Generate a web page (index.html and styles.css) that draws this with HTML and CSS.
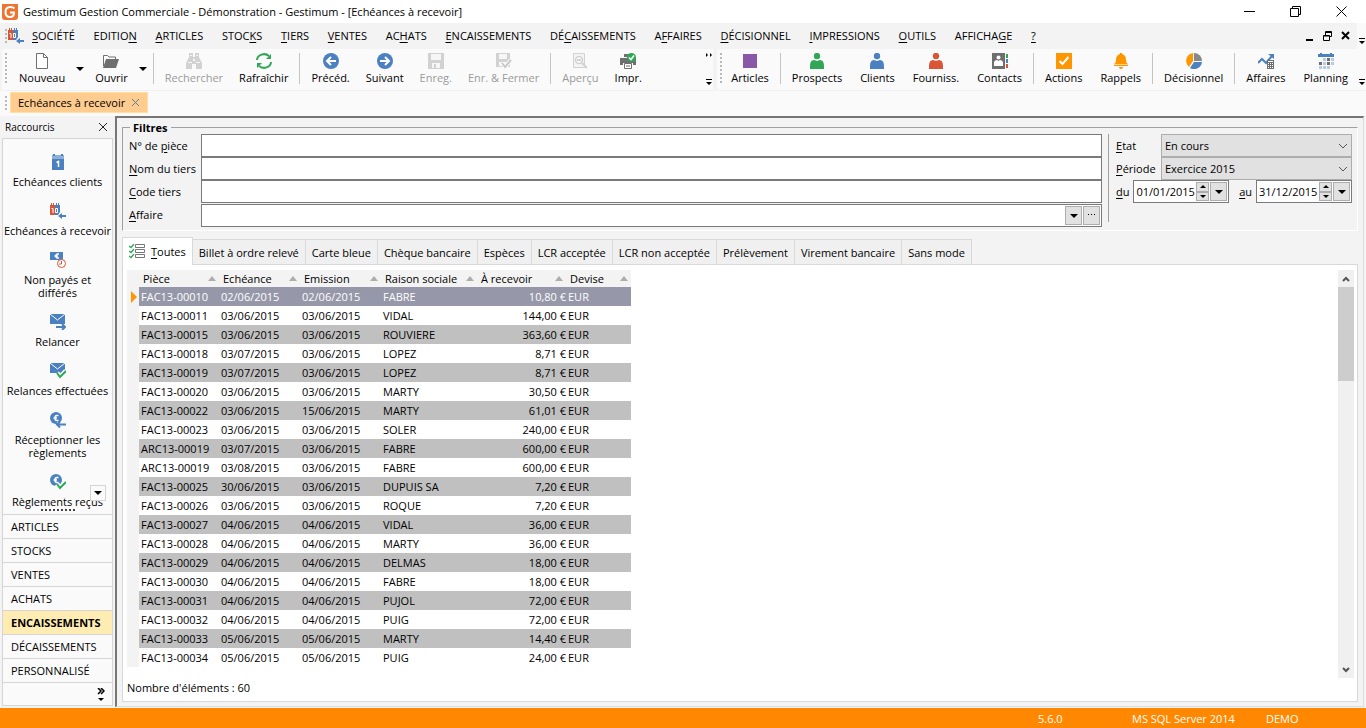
FILE: index.html
```html
<!DOCTYPE html>
<html lang="fr">
<head>
    <meta charset="UTF-8">
    <meta name="viewport" content="width=device-width, initial-scale=1.0">
    <title>Gestimum Gestion Commerciale</title>
    <link rel="stylesheet" href="styles.css">
</head>
<body>
    <!-- Icônes -->
    <svg class="sprite" aria-hidden="true">
        <symbol id="logo" viewBox="0 0 16 16"><path fill="#ee7430" d="M0 0h16v13q0 3-3 3H3q-3 0-3-3z"/><path fill="none" stroke="#fff" stroke-width="2" d="M12.500 4.500Q11 3 8.500 3 3.500 3 3.500 8t4.500 5q4 0 4-4.500H8"/></symbol>
        <symbol id="cal-in" viewBox="0 0 16 16"><path fill="#d95535" d="M0 2h5v10H0z"/><path fill="#4b81c0" d="M5 2h5v7l-2 3H5z"/><path fill="#d95535" d="M1 0h1v3H1zM3 0h1v3H3z"/><path fill="#4b81c0" d="M6 0h1v3H6zM8 0h1v3H8z"/><path fill="none" stroke="#fff" d="M1.500 5.500h1.500V10M5.500 5.500h2v4h-2z"/><path fill="#4b81c0" d="M8 13l4-3v2h4v2h-4v2z"/></symbol>
        <symbol id="new" viewBox="0 0 16 16"><path fill="#fff" stroke="#6f6f6f" d="M2.500.5h7l4 4v11h-11z"/><path fill="none" stroke="#6f6f6f" d="M9.500.5v4h4"/></symbol>
        <symbol id="open" viewBox="0 0 16 16"><path fill="#fff" stroke="#6f6f6f" d="M.5 13V2.500h4l1.500 1.500h6.500V7"/><path fill="#6f6f6f" d="M3 6h13l-3 9H0z"/></symbol>
        <symbol id="find" viewBox="0 0 16 16"><path fill="#d2d2d2" d="M3 0h4v4h2V0h4v4l3 6v6h-6v-5H6v5H0v-6l3-6z"/><path fill="#f6f6f6" d="M4 2h2v1H4zM10 2h2v1h-2zM2 9h4v1H2zM10 9h4v1h-4zM7 6h2v2H7z"/></symbol>
        <symbol id="refresh" viewBox="0 0 16 16"><path fill="none" stroke="#2fa757" stroke-width="2" d="M1 7a7 6 0 0 1 12-4M15 9a7 6 0 0 1-12 4"/><path fill="#2fa757" d="M15 1v5h-5zM1 15v-5h5z"/></symbol>
        <symbol id="prev" viewBox="0 0 16 16"><circle cx="8" cy="8" r="8" fill="#4b81c0"/><path fill="none" stroke="#fff" stroke-width="2" d="M13 8H4M8 4L4 8l4 4"/></symbol>
        <symbol id="next" viewBox="0 0 16 16"><circle cx="8" cy="8" r="8" fill="#4b81c0"/><path fill="none" stroke="#fff" stroke-width="2" d="M3 8h9M8 4l4 4-4 4"/></symbol>
        <symbol id="save" viewBox="0 0 16 16"><path fill="#d2d2d2" d="M0 0h16v16H0z"/><path fill="#f6f6f6" d="M3 1h10v6H3zM4 10h8v5H4z"/><path fill="#d2d2d2" d="M6 11h2v4H6z"/></symbol>
        <symbol id="save-close" viewBox="0 0 16 16"><path fill="#d2d2d2" d="M0 0h14v14H0z"/><path fill="#f6f6f6" d="M3 1h8v5H3zM3 9h8v4H3z"/><path fill="none" stroke="#fafafa" stroke-width="4" d="M6 10l3 4 6-7"/><path fill="none" stroke="#c8c8c8" stroke-width="2" d="M6 10l3 4 6-7"/></symbol>
        <symbol id="preview" viewBox="0 0 16 16"><path fill="#f4f4f4" stroke="#d2d2d2" d="M1.500.5h11v14h-11z"/><circle cx="7" cy="7" r="3.500" fill="#fafafa" stroke="#d2d2d2" stroke-width="1.500"/><path stroke="#d2d2d2" stroke-width="2" d="M5 7h4M10 10l5 5"/></symbol>
        <symbol id="print" viewBox="0 0 16 16"><path fill="#6f6f6f" d="M0 5h16v7h-3v-2H3v2H0zM4 1h5v3H4z"/><path fill="#fff" stroke="#6f6f6f" d="M4.500 10.500h7v5h-7z"/><path stroke="#6f6f6f" d="M6 13h4"/><circle cx="11.500" cy="4.500" r="4.500" fill="#2fa757"/><path fill="none" stroke="#fff" stroke-width="1.500" d="M9 4.500l2 2 3-4"/></symbol>
        <symbol id="articles" viewBox="0 0 16 16"><path fill="#8959a8" d="M1 1h14v14H1z"/></symbol>
        <symbol id="person" viewBox="0 0 16 16"><circle cx="8" cy="3" r="3.200" fill="currentColor"/><path fill="currentColor" d="M1 16v-3q0-6 4-6l3 1 3-1q4 0 4 6v3z"/></symbol>
        <symbol id="contacts" viewBox="0 0 16 16"><path fill="#6f6f6f" d="M0 0h13v16H0z"/><circle cx="6.500" cy="4.500" r="2" fill="#fff"/><path fill="#fff" d="M2 13V9q1-2 3-2l1.500 1L8 7q2 0 3 2v4z"/><path fill="#2fa757" d="M14 1h2v4h-2z"/><path fill="#4b81c0" d="M14 6h2v4h-2z"/><path fill="#d95535" d="M14 11h2v4h-2z"/></symbol>
        <symbol id="actions" viewBox="0 0 16 16"><path fill="#ff9500" d="M0 0h16v16H0z"/><path fill="none" stroke="#fff" stroke-width="2" d="M3.500 8l3 3 6-7"/></symbol>
        <symbol id="bell" viewBox="0 0 16 16"><path fill="#ff9500" d="M7 0h2v1q4 1 4 6 0 3 2 4v2H1v-2q2-1 2-4 0-5 4-6zM6 14h4q0 2-2 2t-2-2z"/><path stroke="#ffd59a" d="M1 11.500h14"/></symbol>
        <symbol id="pie" viewBox="0 0 16 16"><path fill="#ff9500" d="M7 0v8l-4 6a8 8 0 0 1 4-14z"/><path fill="#888" d="M8 0a8 8 0 0 1 8 8H8z"/><path fill="#4b81c0" d="M8 9h8a8 8 0 0 1-12 6z"/></symbol>
        <symbol id="deals" viewBox="0 0 16 16"><path fill="none" stroke="#4b81c0" stroke-width="2" d="M0 10l4-4 4 4 6-7"/><path fill="#4b81c0" d="M10 1h6v5z"/><path fill="#6f6f6f" d="M9 7h7v9H9z"/><path fill="#fff" d="M10 8h5v1h-5zM10 10h1v1h-1zM12 10h1v1h-1zM14 10h1v1h-1zM10 12h1v1h-1zM12 12h1v1h-1zM14 12h1v1h-1zM10 14h1v1h-1zM12 14h1v1h-1zM14 14h1v1h-1z"/></symbol>
        <symbol id="planning" viewBox="0 0 16 16"><path fill="#4b81c0" d="M0 1h16v3H0zM2 0h2v1H2zM12 0h2v1h-2z"/><path fill="#b8cbe4" d="M5 5h3v3H5zM13 5h3v3h-3zM5 9h3v3H5zM13 9h3v3h-3zM1 13h3v3H1zM5 13h3v3H5zM9 13h3v3H9z"/><path fill="#6f6f6f" d="M9 5h3v3H9zM1 9h3v3H1zM9 9h3v3H9z"/></symbol>
        <symbol id="cal-one" viewBox="0 0 16 16"><path fill="#8fb0d9" d="M2 1h12v4H2z"/><path fill="#4b81c0" d="M2 5h12v11H2zM3 0h2v2H3zM11 0h2v2h-2z"/><path fill="none" stroke="#fff" stroke-width="1.500" d="M6.500 8.500l2-1V13"/></symbol>
        <symbol id="unpaid" viewBox="0 0 16 16"><path fill="#4b81c0" d="M0 0h13v8H0z"/><path fill="none" stroke="#fff" stroke-width="1.500" d="M9 2H7.500Q6 2 6 4t1.500 2H9M4.500 4H8"/><circle cx="11.500" cy="11.500" r="4" fill="#fff" stroke="#d95535"/><path fill="none" stroke="#d95535" d="M11.500 9v3H9"/></symbol>
        <symbol id="mail-out" viewBox="0 0 16 16"><path fill="#4b81c0" d="M0 0h15v10H0z"/><path fill="none" stroke="#fff" d="M0 0l7.500 6L15 0"/><path fill="none" stroke="#fafafa" stroke-width="4" d="M6 13h9"/><path fill="none" stroke="#4b81c0" stroke-width="2" d="M6 13h9M12 10l3 3-3 3"/></symbol>
        <symbol id="mail-ok" viewBox="0 0 16 16"><path fill="#4b81c0" d="M0 0h15v10H0z"/><path fill="none" stroke="#fff" d="M0 0l7.500 6L15 0"/><path fill="none" stroke="#fafafa" stroke-width="5" d="M7 10l3 4 6-6"/><path fill="none" stroke="#2fa757" stroke-width="2" d="M7 10l3 4 6-6"/></symbol>
        <symbol id="euro-in" viewBox="0 0 16 16"><circle cx="6" cy="6" r="6" fill="#4b81c0"/><path fill="none" stroke="#fff" stroke-width="1.500" d="M8.500 3.500H7Q5 3.500 5 6t2 2.500h1.500M3.500 6H7"/><path fill="none" stroke="#fafafa" stroke-width="5" d="M7 12.500h9"/><path fill="none" stroke="#4b81c0" stroke-width="2" d="M16 12.500H7M10 9.500l-3 3 3 3"/></symbol>
        <symbol id="euro-ok" viewBox="0 0 16 16"><circle cx="6" cy="6" r="6" fill="#4b81c0"/><path fill="none" stroke="#fff" stroke-width="1.500" d="M8.500 3.500H7Q5 3.500 5 6t2 2.500h1.500M3.500 6H7"/><path fill="none" stroke="#fafafa" stroke-width="5" d="M7 10l3 4 6-6"/><path fill="none" stroke="#2fa757" stroke-width="2" d="M7 10l3 4 6-6"/></symbol>
        <symbol id="checklist" viewBox="0 0 16 16"><path fill="#fff" stroke="#777" d="M6.500.5h9v3h-9zM6.500 5.500h9v3h-9zM6.500 10.500h9v3h-9z"/><path fill="none" stroke="#2fa757" stroke-width="1.300" d="M0 2l2 1.500L5 0M0 7l2 1.500L5 5M0 12l2 1.500L5 10"/></symbol>
        <symbol id="overflow" viewBox="0 0 6 6"><path d="M0 0h6v1H0zM0 3h6L3 6z"/></symbol>
        <symbol id="down" viewBox="0 0 8 4"><path d="M0 0h8L4 4z"/></symbol>
        <symbol id="up" viewBox="0 0 8 4"><path d="M0 4h8L4 0z"/></symbol>
    </svg>

    <header class="titlebar">
        <svg class="icon"><use href="#logo"/></svg>
        <span class="title">Gestimum Gestion Commerciale - Démonstration - Gestimum - [Echéances à recevoir]</span>
        <button aria-label="Réduire"><svg width="11" height="11"><path stroke="#000" d="M0 5.500h11"/></svg></button>
        <button aria-label="Restaurer"><svg width="11" height="11"><path fill="none" stroke="#000" d="M.5 2.500h8v8h-8zM2.500 2V.5h8v8H9"/></svg></button>
        <button aria-label="Fermer"><svg width="11" height="11"><path stroke="#000" d="M.5.5l10 10M10.500.5l-10 10"/></svg></button>
    </header>

    <nav class="menu">
        <i class="grip"></i>
        <svg class="icon"><use href="#cal-in"/></svg>
        <div class="menu-items">
            <a href="#"><u>S</u>OCIÉTÉ</a>
            <a href="#">EDITIO<u>N</u></a>
            <a href="#"><u>A</u>RTICLES</a>
            <a href="#">STOC<u>K</u>S</a>
            <a href="#"><u>T</u>IERS</a>
            <a href="#"><u>V</u>ENTES</a>
            <a href="#">AC<u>H</u>ATS</a>
            <a href="#"><u>E</u>NCAISSEMENTS</a>
            <a href="#">DÉ<u>C</u>AISSEMENTS</a>
            <a href="#">A<u>F</u>FAIRES</a>
            <a href="#"><u>D</u>ÉCISIONNEL</a>
            <a href="#"><u>I</u>MPRESSIONS</a>
            <a href="#"><u>O</u>UTILS</a>
            <a href="#">AFFICHA<u>G</u>E</a>
            <a href="#"><u>?</u></a>
        </div>
        <div class="mdi">
            <button aria-label="Réduire la fenêtre"><svg width="10" height="10"><path d="M1 8h7v2H1z"/></svg></button>
            <button aria-label="Restaurer la fenêtre"><svg width="10" height="10"><path fill="none" stroke="#000" d="M.5 4.500h6v5h-6zM.5 5h6M2.500 4V.5h6v5H7M3 1.500h6"/></svg></button>
            <button aria-label="Fermer la fenêtre"><svg width="10" height="10"><path stroke="#000" stroke-width="2" d="M1 1l7 7M8 1L1 8"/></svg></button>
        </div>
        <button class="overflow" aria-label="Options du menu"><svg><use href="#overflow"/></svg></button>
    </nav>

    <div class="toolbars">
        <div class="toolbar main">
            <i class="grip"></i>
            <button class="tool"><svg class="icon"><use href="#new"/></svg>Nouveau</button>
            <button class="drop" aria-label="Choix nouveau"><svg><use href="#down"/></svg></button>
            <button class="tool"><svg class="icon"><use href="#open"/></svg>Ouvrir</button>
            <button class="drop" aria-label="Choix ouvrir"><svg><use href="#down"/></svg></button>
            <i class="sep"></i>
            <button class="tool" disabled><svg class="icon"><use href="#find"/></svg>Rechercher</button>
            <button class="tool"><svg class="icon"><use href="#refresh"/></svg>Rafraîchir</button>
            <i class="sep"></i>
            <button class="tool"><svg class="icon"><use href="#prev"/></svg>Précéd.</button>
            <button class="tool"><svg class="icon"><use href="#next"/></svg>Suivant</button>
            <button class="tool" disabled><svg class="icon"><use href="#save"/></svg>Enreg.</button>
            <button class="tool" disabled><svg class="icon"><use href="#save-close"/></svg>Enr. &amp; Fermer</button>
            <i class="sep"></i>
            <button class="tool" disabled><svg class="icon"><use href="#preview"/></svg>Aperçu</button>
            <button class="tool"><svg class="icon"><use href="#print"/></svg>Impr.</button>
            <button class="overflow" aria-label="Autres boutons">
                <svg class="more" viewBox="0 0 6 4"><path d="M0 0l2 2-2 2zM4 0l2 2-2 2z"/></svg>
                <svg><use href="#overflow"/></svg>
            </button>
        </div>
        <div class="toolbar modules">
            <i class="grip"></i>
            <button class="tool"><svg class="icon"><use href="#articles"/></svg>Articles</button>
            <i class="sep"></i>
            <button class="tool"><svg class="icon green"><use href="#person"/></svg>Prospects</button>
            <button class="tool"><svg class="icon blue"><use href="#person"/></svg>Clients</button>
            <button class="tool"><svg class="icon red"><use href="#person"/></svg>Fourniss.</button>
            <button class="tool"><svg class="icon"><use href="#contacts"/></svg>Contacts</button>
            <i class="sep"></i>
            <button class="tool"><svg class="icon"><use href="#actions"/></svg>Actions</button>
            <button class="tool"><svg class="icon"><use href="#bell"/></svg>Rappels</button>
            <i class="sep"></i>
            <button class="tool"><svg class="icon"><use href="#pie"/></svg>Décisionnel</button>
            <i class="sep"></i>
            <button class="tool"><svg class="icon"><use href="#deals"/></svg>Affaires</button>
            <button class="tool"><svg class="icon"><use href="#planning"/></svg>Planning</button>
            <button class="overflow" aria-label="Autres modules"><svg><use href="#overflow"/></svg></button>
        </div>
    </div>

    <div class="windows">
        <i class="grip"></i>
        <div class="window-tab">
            <span>Echéances à recevoir</span>
            <button aria-label="Fermer l'onglet"><svg width="7" height="7"><path stroke="#5d7f9f" d="M0 0l7 7M7 0L0 7"/></svg></button>
        </div>
    </div>

    <div class="workspace">
        <aside class="sidebar">
            <div class="sidebar-head">
                <span>Raccourcis</span>
                <button aria-label="Fermer les raccourcis"><svg width="8" height="8"><path stroke="#222" d="M0 0l8 8M8 0L0 8"/></svg></button>
            </div>
            <div class="sidebar-box">
                <div class="shortcuts">
                    <a href="#"><svg class="icon"><use href="#cal-one"/></svg>Echéances clients</a>
                    <a href="#"><svg class="icon"><use href="#cal-in"/></svg>Echéances à recevoir</a>
                    <a href="#"><svg class="icon"><use href="#unpaid"/></svg>Non payés et<br>différés</a>
                    <a href="#"><svg class="icon"><use href="#mail-out"/></svg>Relancer</a>
                    <a href="#"><svg class="icon"><use href="#mail-ok"/></svg>Relances effectuées</a>
                    <a href="#"><svg class="icon"><use href="#euro-in"/></svg>Réceptionner les<br>règlements</a>
                    <a href="#"><svg class="icon"><use href="#euro-ok"/></svg>Règlements reçus</a>
                    <button class="scroll-down" aria-label="Suite"><svg><use href="#down"/></svg></button>
                </div>
                <i class="splitter"></i>
                <nav class="groups">
                    <a href="#">ARTICLES</a>
                    <a href="#">STOCKS</a>
                    <a href="#">VENTES</a>
                    <a href="#">ACHATS</a>
                    <a href="#" class="active">ENCAISSEMENTS</a>
                    <a href="#">DÉCAISSEMENTS</a>
                    <a href="#">PERSONNALISÉ</a>
                    <button aria-label="Configurer">
                        <svg width="8" height="13"><path fill="none" stroke="#000" stroke-width="1.500" d="M1 0l3 3-3 3M4 0l3 3-3 3"/><path d="M1 10h6l-3 3z"/></svg>
                    </button>
                </nav>
            </div>
        </aside>

        <main class="document">
            <fieldset class="filters">
                <legend>Filtres</legend>
                <div class="filter-cols">
                    <div class="filter-text">
                        <label for="piece">N° de <u>p</u>ièce</label>
                        <input type="text" id="piece">
                        <label for="nom"><u>N</u>om du tiers</label>
                        <input type="text" id="nom">
                        <label for="code"><u>C</u>ode tiers</label>
                        <input type="text" id="code">
                        <label for="affaire"><u>A</u>ffaire</label>
                        <div class="field affaire">
                            <input type="text" id="affaire">
                            <button aria-label="Liste des affaires"><svg><use href="#down"/></svg></button>
                            <button aria-label="Rechercher une affaire"><svg width="8" height="2"><path d="M0 0h1v1H0zM3 0h1v1H3zM6 0h1v1H6z"/></svg></button>
                        </div>
                    </div>
                    <div class="filter-period">
                        <div class="line">
                            <label for="etat"><u>E</u>tat</label>
                            <select id="etat"><option>En cours</option></select>
                            <svg class="chevron" viewBox="0 0 10 6"><path fill="none" stroke="#555" d="M1 1l4 4 4-4"/></svg>
                        </div>
                        <div class="line">
                            <label for="periode"><u>P</u>ériode</label>
                            <select id="periode"><option>Exercice 2015</option></select>
                            <svg class="chevron" viewBox="0 0 10 6"><path fill="none" stroke="#555" d="M1 1l4 4 4-4"/></svg>
                        </div>
                        <div class="dates">
                            <label for="du"><u>d</u>u</label>
                            <div class="field date">
                                <input type="text" id="du" value="01/01/2015">
                                <span class="spin">
                                    <button aria-label="Jour suivant"><svg><use href="#up"/></svg></button>
                                    <button aria-label="Jour précédent"><svg><use href="#down"/></svg></button>
                                </span>
                                <button aria-label="Calendrier début"><svg><use href="#down"/></svg></button>
                            </div>
                            <label for="au" class="to"><u>a</u>u</label>
                            <div class="field date">
                                <input type="text" id="au" value="31/12/2015">
                                <span class="spin">
                                    <button aria-label="Jour suivant"><svg><use href="#up"/></svg></button>
                                    <button aria-label="Jour précédent"><svg><use href="#down"/></svg></button>
                                </span>
                                <button aria-label="Calendrier fin"><svg><use href="#down"/></svg></button>
                            </div>
                        </div>
                    </div>
                </div>
            </fieldset>

            <div class="tabs" role="tablist">
                <button role="tab" class="active" aria-selected="true"><svg class="icon"><use href="#checklist"/></svg><span><u>T</u>outes</span></button>
                <button role="tab">Billet à ordre relevé</button>
                <button role="tab">Carte bleue</button>
                <button role="tab">Chèque bancaire</button>
                <button role="tab">Espèces</button>
                <button role="tab">LCR acceptée</button>
                <button role="tab">LCR non acceptée</button>
                <button role="tab">Prélèvement</button>
                <button role="tab">Virement bancaire</button>
                <button role="tab">Sans mode</button>
            </div>

            <section class="panel">
                <div class="grid">
                    <table>
                        <colgroup>
                            <col class="c-mark"><col class="c-piece"><col class="c-date"><col class="c-date"><col class="c-name"><col class="c-amount"><col class="c-cur">
                        </colgroup>
                        <thead>
                            <tr><th class="mark"></th><th>Pièce</th><th>Echéance</th><th>Emission</th><th>Raison sociale</th><th>À recevoir</th><th>Devise</th></tr>
                        </thead>
                        <tbody>
                            <tr class="selected"><td class="mark"><svg viewBox="0 0 6 12"><path fill="#ff9500" d="M0 0l6 6-6 6z"/></svg></td><td>FAC13-00010</td><td>02/06/2015</td><td>02/06/2015</td><td>FABRE</td><td class="num">10,80 €</td><td>EUR</td></tr>
                            <tr><td class="mark"></td><td>FAC13-00011</td><td>03/06/2015</td><td>03/06/2015</td><td>VIDAL</td><td class="num">144,00 €</td><td>EUR</td></tr>
                            <tr><td class="mark"></td><td>FAC13-00015</td><td>03/06/2015</td><td>03/06/2015</td><td>ROUVIERE</td><td class="num">363,60 €</td><td>EUR</td></tr>
                            <tr><td class="mark"></td><td>FAC13-00018</td><td>03/07/2015</td><td>03/06/2015</td><td>LOPEZ</td><td class="num">8,71 €</td><td>EUR</td></tr>
                            <tr><td class="mark"></td><td>FAC13-00019</td><td>03/07/2015</td><td>03/06/2015</td><td>LOPEZ</td><td class="num">8,71 €</td><td>EUR</td></tr>
                            <tr><td class="mark"></td><td>FAC13-00020</td><td>03/06/2015</td><td>03/06/2015</td><td>MARTY</td><td class="num">30,50 €</td><td>EUR</td></tr>
                            <tr><td class="mark"></td><td>FAC13-00022</td><td>03/06/2015</td><td>15/06/2015</td><td>MARTY</td><td class="num">61,01 €</td><td>EUR</td></tr>
                            <tr><td class="mark"></td><td>FAC13-00023</td><td>03/06/2015</td><td>03/06/2015</td><td>SOLER</td><td class="num">240,00 €</td><td>EUR</td></tr>
                            <tr><td class="mark"></td><td>ARC13-00019</td><td>03/07/2015</td><td>03/06/2015</td><td>FABRE</td><td class="num">600,00 €</td><td>EUR</td></tr>
                            <tr><td class="mark"></td><td>ARC13-00019</td><td>03/08/2015</td><td>03/06/2015</td><td>FABRE</td><td class="num">600,00 €</td><td>EUR</td></tr>
                            <tr><td class="mark"></td><td>FAC13-00025</td><td>30/06/2015</td><td>03/06/2015</td><td>DUPUIS SA</td><td class="num">7,20 €</td><td>EUR</td></tr>
                            <tr><td class="mark"></td><td>FAC13-00026</td><td>03/06/2015</td><td>03/06/2015</td><td>ROQUE</td><td class="num">7,20 €</td><td>EUR</td></tr>
                            <tr><td class="mark"></td><td>FAC13-00027</td><td>04/06/2015</td><td>04/06/2015</td><td>VIDAL</td><td class="num">36,00 €</td><td>EUR</td></tr>
                            <tr><td class="mark"></td><td>FAC13-00028</td><td>04/06/2015</td><td>04/06/2015</td><td>MARTY</td><td class="num">36,00 €</td><td>EUR</td></tr>
                            <tr><td class="mark"></td><td>FAC13-00029</td><td>04/06/2015</td><td>04/06/2015</td><td>DELMAS</td><td class="num">18,00 €</td><td>EUR</td></tr>
                            <tr><td class="mark"></td><td>FAC13-00030</td><td>04/06/2015</td><td>04/06/2015</td><td>FABRE</td><td class="num">18,00 €</td><td>EUR</td></tr>
                            <tr><td class="mark"></td><td>FAC13-00031</td><td>04/06/2015</td><td>04/06/2015</td><td>PUJOL</td><td class="num">72,00 €</td><td>EUR</td></tr>
                            <tr><td class="mark"></td><td>FAC13-00032</td><td>04/06/2015</td><td>04/06/2015</td><td>PUIG</td><td class="num">72,00 €</td><td>EUR</td></tr>
                            <tr><td class="mark"></td><td>FAC13-00033</td><td>05/06/2015</td><td>05/06/2015</td><td>MARTY</td><td class="num">14,40 €</td><td>EUR</td></tr>
                            <tr><td class="mark"></td><td>FAC13-00034</td><td>05/06/2015</td><td>05/06/2015</td><td>PUIG</td><td class="num">24,00 €</td><td>EUR</td></tr>
                        </tbody>
                    </table>
                    <div class="scrollbar">
                        <button aria-label="Monter"><svg viewBox="0 0 8 6"><path fill="none" stroke="#555" stroke-width="2" d="M1 5l3-3 3 3"/></svg></button>
                        <div class="thumb"></div>
                        <button aria-label="Descendre"><svg viewBox="0 0 8 6"><path fill="none" stroke="#555" stroke-width="2" d="M1 1l3 3 3-3"/></svg></button>
                    </div>
                </div>
                <p class="count">Nombre d'éléments : 60</p>
            </section>
        </main>
    </div>

    <footer class="status">
        <span class="version">5.6.0</span>
        <span class="server">MS SQL Server 2014</span>
        <span class="user">DEMO</span>
    </footer>
</body>
</html>
```
FILE: styles.css
```css
* {
    box-sizing: border-box;
}
body {
    margin: 0;
    min-height: 100vh;
    display: flex;
    flex-direction: column;
    background: #f3f3f3;
    color: #000;
    font-family: "Open Sans", "Noto Sans", sans-serif;
    font-size: 11px;
    line-height: 16px;
}
button, input, select {
    font: inherit;
    color: inherit;
    margin: 0;
    padding: 0;
    border: none;
    border-radius: 0;
    background: none;
}
button {
    display: flex;
    align-items: center;
    justify-content: center;
}
a {
    color: inherit;
    text-decoration: none;
}
svg {
    display: block;
    flex: none;
}
u {
    text-underline-offset: 2px;
}
.sprite {
    position: absolute;
    width: 0;
    height: 0;
}
.icon {
    width: 16px;
    height: 16px;
}
.green { color: #2fa757; }
.blue { color: #4b81c0; }
.red { color: #d95535; }
.grip {
    flex: none;
    width: 2px;
    background: repeating-linear-gradient(#b8b8b8 0 2px, transparent 2px 4px);
}

/* Barre de titre */
.titlebar {
    display: flex;
    align-items: center;
    height: 23px;
    padding: 0 2px;
    background: #fff;
}
.title {
    flex: 1;
    padding-left: 5px;
}
.titlebar button {
    width: 46px;
    height: 20px;
}

/* Menu */
.menu {
    display: flex;
    align-items: center;
    height: 26px;
    padding-left: 5px;
}
.menu .grip {
    height: 14px;
}
.menu .icon {
    margin-left: 1px;
}
.menu-items {
    flex: 1;
    display: flex;
    justify-content: space-between;
    max-width: 1012px;
    padding-left: 8px;
}
.mdi {
    display: flex;
    gap: 8px;
    margin-left: auto;
    padding-right: 6px;
}
.overflow {
    align-self: stretch;
    flex-direction: column;
    justify-content: flex-end;
    width: 9px;
    padding-bottom: 5px;
    background: #fafafa;
}
.overflow svg {
    width: 6px;
    height: 6px;
}

/* Barres d'outils */
.toolbars {
    display: flex;
    gap: 4px;
    height: 42px;
    padding-left: 2px;
}
.toolbar {
    display: flex;
    align-items: flex-start;
    padding-left: 3px;
    border-bottom: 1px solid #f0f0f0;
    border-radius: 3px;
    background: #fafafa;
}
.toolbar.main {
    flex: 1;
}
.toolbar .grip {
    height: 31px;
    margin-top: 4px;
}
.tool {
    flex-direction: column;
    padding: 4px 8px 0;
    white-space: nowrap;
}
.tool .icon {
    margin-bottom: 1px;
}
.main .tool:first-of-type {
    padding-left: 12px;
}
.modules .tool {
    padding: 4px 9px 0;
}
.tool:disabled {
    color: #9b9b9b;
}
.drop {
    width: 14px;
    height: 40px;
}
.drop svg {
    width: 8px;
    height: 4px;
}
.sep {
    width: 1px;
    height: 31px;
    margin: 4px 2px 0;
    background: #c4c4c4;
}
.main .sep {
    margin: 4px 3px 0;
}
.toolbar .overflow {
    margin-left: auto;
}
.toolbar .more {
    height: 4px;
    margin-top: 4px;
    margin-bottom: auto;
}

/* Fenêtres ouvertes */
.windows {
    display: flex;
    align-items: center;
    height: 25px;
    padding: 0 0 2px 5px;
    background: #fafafa;
}
.windows .grip {
    height: 14px;
}
.window-tab {
    display: flex;
    align-items: center;
    gap: 7px;
    height: 21px;
    margin-left: 3px;
    padding: 0 8px 0 7px;
    border: 1px solid #ffe0a3;
    background: #ffcc8f;
}

.workspace {
    flex: 1;
    display: flex;
}

/* Raccourcis */
.sidebar {
    flex: none;
    display: flex;
    flex-direction: column;
    width: 115px;
    padding: 0 2px 2px;
}
.sidebar-head {
    display: flex;
    align-items: center;
    justify-content: space-between;
    height: 22px;
    padding: 0 6px 0 3px;
    font-size: 10px;
}
.sidebar-box {
    flex: 1;
    display: flex;
    flex-direction: column;
    border: 1px solid #d5d5d5;
    background: #fafafa;
}
.shortcuts {
    position: relative;
    flex: 1;
    display: flex;
    flex-direction: column;
    gap: 15px;
    padding-top: 15px;
    line-height: 13px;
    text-align: center;
    white-space: nowrap;
}
.shortcuts .icon {
    margin: 0 auto 5px;
}
.scroll-down {
    position: absolute;
    right: 6px;
    bottom: 8px;
    width: 16px;
    height: 16px;
    border: 1px solid #d5d5d5;
    background: #fafafa;
}
.scroll-down svg {
    width: 8px;
    height: 4px;
}
.splitter {
    width: 34px;
    height: 2px;
    margin: 0 auto 3px;
    background: repeating-linear-gradient(90deg, #444 0 2px, transparent 2px 4px);
}
.groups a {
    display: block;
    height: 24px;
    padding-left: 8px;
    border-top: 1px solid #d5d5d5;
    line-height: 23px;
}
.groups .active {
    background: #ffecb3;
    font-weight: bold;
}
.groups button {
    width: 100%;
    height: 23px;
    padding-right: 7px;
    justify-content: flex-end;
    border-top: 1px solid #d5d5d5;
}

/* Document */
.document {
    flex: 1;
    display: flex;
    flex-direction: column;
    min-width: 0;
    margin: 0 2px 1px 0;
    padding: 3px 5px 4px;
    border: 1px solid #dcdcdc;
    border-top: 2px solid #767676;
    border-left: 2px solid #767676;
}
.filters {
    min-width: 0;
    margin: 0;
    padding: 0 5px 3px 6px;
    border: 1px solid #fff;
    border-top-color: #a0a0a0;
    border-left-color: #a0a0a0;
}
.filters legend {
    margin-left: 1px;
    padding: 0 3px;
    font-weight: bold;
    line-height: 13px;
}
.filter-cols {
    display: flex;
    gap: 6px;
}
.filter-text {
    flex: 1;
    display: grid;
    grid-template-columns: 72px 1fr;
    align-items: center;
}
.filter-text > input, .field {
    height: 23px;
    border: 1px solid #7a7a7a;
    background: #fff;
}
.field {
    display: flex;
    gap: 1px;
    padding: 1px;
}
.field.affaire {
    margin-top: 1px;
}
.field input {
    flex: 1;
    min-width: 0;
}
.field button {
    width: 17px;
    border: 1px solid #adadad;
    background: #e1e1e1;
}
.field svg {
    width: 8px;
    height: 4px;
}
.filter-period {
    align-self: flex-start;
    width: 244px;
    height: 88px;
    padding-left: 7px;
    border-left: 1px solid #a0a0a0;
}
.line {
    position: relative;
    display: grid;
    grid-template-columns: 45px 1fr;
    align-items: center;
}
select {
    appearance: none;
    height: 23px;
    padding-left: 3px;
    border: 1px solid #adadad;
    background: #e1e1e1;
}
.chevron {
    position: absolute;
    right: 4px;
    top: 9px;
    width: 10px;
    height: 6px;
    pointer-events: none;
}
.dates {
    display: flex;
    align-items: center;
    gap: 4px;
}
.dates .to {
    margin-left: auto;
}
.date {
    width: 96px;
    padding-left: 2px;
}
.spin {
    display: flex;
    flex-direction: column;
    width: 13px;
}
.spin button {
    flex: 1;
    width: 13px;
}
.spin svg {
    width: 6px;
    height: 3px;
}

/* Onglets */
.tabs {
    display: flex;
    align-items: flex-end;
    margin-top: 6px;
}
.tabs button {
    height: 25px;
    padding: 2px 6px 0;
    border: 1px solid #d9d9d9;
    border-width: 1px 1px 0 0;
    background: #f0f0f0;
    white-space: nowrap;
}
.tabs .active {
    position: relative;
    height: 28px;
    gap: 6px;
    margin-bottom: -1px;
    padding: 0 6px;
    border-left-width: 1px;
    background: #fff;
}
.panel {
    flex: 1;
    display: flex;
    flex-direction: column;
    padding: 5px 3px 5px 4px;
    border: 1px solid #d9d9d9;
    background: #fff;
}
.grid {
    flex: 1;
    display: flex;
    justify-content: space-between;
}
table {
    align-self: flex-start;
    width: 504px;
    border-collapse: collapse;
    table-layout: fixed;
}
.c-mark { width: 12px; }
.c-piece { width: 80px; }
.c-date { width: 81px; }
.c-name { width: 96px; }
.c-amount { width: 89px; }
.c-cur { width: 65px; }
th {
    height: 17px;
    padding: 1px 3px 0 4px;
    background: #f3f3f3;
    font-weight: normal;
    text-align: left;
    white-space: nowrap;
}
th:not(.mark)::after {
    content: "";
    float: right;
    margin-top: 5px;
    border: 4px solid transparent;
    border-top-width: 0;
    border-bottom: 5px solid #adadad;
}
td {
    height: 19px;
    padding: 0 2px;
    white-space: nowrap;
}
tbody tr:nth-child(odd) {
    background: #c0c0c0;
}
tbody tr.selected {
    background: #9697a8;
    color: #fff;
}
.mark, tbody tr .mark {
    padding: 0 0 0 4px;
    background: #f3f3f3;
}
.mark svg {
    width: 6px;
    height: 12px;
}
.num {
    padding-right: 0;
    text-align: right;
}
.scrollbar {
    display: flex;
    flex-direction: column;
    width: 16px;
    background: #f0f0f0;
}
.scrollbar button {
    height: 17px;
}
.scrollbar svg {
    width: 8px;
    height: 6px;
}
.thumb {
    height: 94px;
    margin-bottom: auto;
    background: #cdcdcd;
}
.count {
    margin: 2px 0 0;
}

/* Barre d'état */
.status {
    display: flex;
    justify-content: flex-end;
    height: 20px;
    padding-top: 3px;
    background: #ff8800;
    color: #fff;
}
.version { width: 94px; }
.server { width: 134px; }
.user { width: 100px; }
```
